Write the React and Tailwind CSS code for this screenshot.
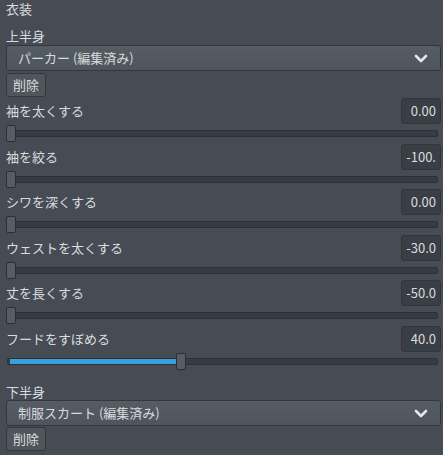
import React from 'react';

const sliders = [
  { label: '袖を太くする', value: '0.00', pos: 0 },
  { label: '袖を絞る', value: '-100.', pos: 0 },
  { label: 'シワを深くする', value: '0.00', pos: 0 },
  { label: 'ウェストを太くする', value: '-30.0', pos: 0 },
  { label: '丈を長くする', value: '-50.0', pos: 0 },
  { label: 'フードをすぼめる', value: '40.0', pos: 170, fill: true },
];

const Chevron = () => (
  <svg width="14" height="9" viewBox="0 0 14 9" className="text-[#e4e6e8]">
    <polyline points="2,2 7,7 12,2" fill="none" stroke="currentColor" strokeWidth="2.6" strokeLinecap="round" strokeLinejoin="round" />
  </svg>
);

const Dropdown = ({ text }) => (
  <div className="h-[26px] flex items-center justify-between pl-[11px] pr-[12px] rounded-[3px] border border-[#33383e] bg-gradient-to-b from-[#565c64] to-[#4f555d]">
    <span>{text}</span>
    <Chevron />
  </div>
);

const DeleteButton = () => (
  <div className="w-[40px] h-[24px] flex items-center justify-center rounded-[3px] border border-[#33383e] bg-[#50565d]">
    削除
  </div>
);

const SliderRow = ({ label, value, pos, fill }) => (
  <div>
    <div className="h-[26px] flex items-center justify-between">
      <span>{label}</span>
      <div className="w-[40px] h-[26px] flex items-center justify-end pr-[4px] overflow-hidden rounded-[3px] border border-[#31363b] bg-[#3a3f45]">
        {value}
      </div>
    </div>
    <div className="h-[19.5px] relative pt-[6px] pl-[1px] pr-[3px]">
      <div className="h-[7px] rounded-[2px] border border-[#2c3035] bg-[#373c42]" />
      {fill && (
        <div className="absolute left-[4px] top-[7px] h-[5px] bg-[#3a9fdf]" style={{ width: pos - 3 }} />
      )}
      <div
        className="absolute top-[1px] w-[10px] h-[17px] rounded-[2px] border border-[#2b2f34] bg-[#575d65]"
        style={{ left: pos }}
      />
    </div>
  </div>
);

export default function App() {
  return (
    <div className="w-[443px] h-[455px] overflow-hidden bg-[#474c54] text-[#d9dcdf] text-[13px] leading-[18px] pl-[6px] pr-[2px] font-['Noto_Sans_CJK_JP','Noto_Sans',sans-serif]">
      <div className="h-[18px] flex items-center">衣装</div>

      <div className="mt-[9px] h-[18px] flex items-center">上半身</div>
      <Dropdown text="パーカー (編集済み)" />
      <div className="mt-[2px]">
        <DeleteButton />
      </div>

      <div className="mt-[1px]">
        {sliders.map((s) => (
          <SliderRow key={s.label} {...s} />
        ))}
      </div>

      <div className="mt-[13px] h-[16px] flex items-center">下半身</div>
      <Dropdown text="制服スカート (編集済み)" />
      <div className="mt-[1px]">
        <DeleteButton />
      </div>
    </div>
  );
}
